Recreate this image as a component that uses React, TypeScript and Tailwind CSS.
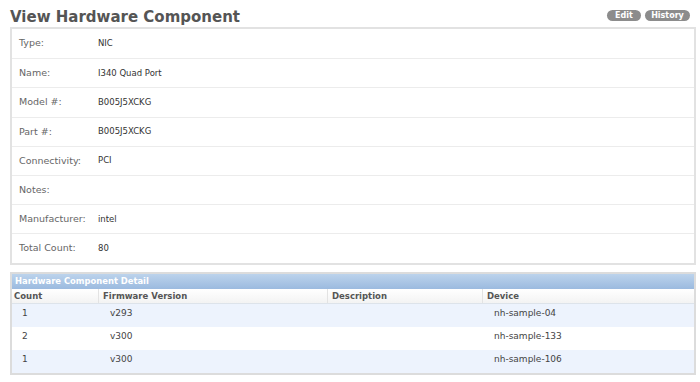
const fields = [
  { label: "Type:", value: "NIC" },
  { label: "Name:", value: "I340 Quad Port" },
  { label: "Model #:", value: "B005J5XCKG" },
  { label: "Part #:", value: "B005J5XCKG" },
  { label: "Connectivity:", value: "PCI" },
  { label: "Notes:", value: "" },
  { label: "Manufacturer:", value: "intel" },
  { label: "Total Count:", value: "80" },
];

const rows = [
  { count: "1", firmware: "v293", description: "", device: "nh-sample-04" },
  { count: "2", firmware: "v300", description: "", device: "nh-sample-133" },
  { count: "1", firmware: "v300", description: "", device: "nh-sample-106" },
];

export default function App() {
  return (
    <div className="h-[382px] w-[700px] bg-white pl-[10px] pr-[4px] pt-[7px] font-['DejaVu_Sans',Verdana,sans-serif]">
      {/* Title bar */}
      <div className="flex h-[20px] items-center justify-between pr-[6px]">
        <h1 className="text-[15px] font-bold leading-[18px] text-[#555]">
          View Hardware Component
        </h1>
        <div className="flex gap-[4px] self-start pt-[3px]">
          <button className="h-[11px] w-[34px] rounded-full bg-[#8c8c8c] text-[8px] font-bold leading-[11px] text-white">
            Edit
          </button>
          <button className="h-[11px] w-[45px] rounded-full bg-[#8c8c8c] text-[8px] font-bold leading-[11px] text-white">
            History
          </button>
        </div>
      </div>

      {/* Fields */}
      <div className="border-2 border-[#e2e2e2]">
        {fields.map((f, i) => (
          <div
            key={f.label}
            className={`flex h-[29.2px] items-center ${i > 0 ? "border-t border-[#ececec]" : ""}`}
          >
            <span className="w-[86px] pl-[7px] text-[9.5px] text-[#666]">
              {f.label}
            </span>
            <span className="text-[8.5px] text-[#333]">{f.value}</span>
          </div>
        ))}
      </div>

      {/* Detail table */}
      <div className="mt-[7px] border-2 border-[#dcdcdc]">
        <div className="h-[15px] bg-gradient-to-b from-[#bcd3ec] to-[#9bbadf] pl-[3px] text-[8.4px] font-bold leading-[15px] text-white">
          Hardware Component Detail
        </div>
        <div className="flex h-[15px] border-b border-[#dde3ea] bg-gradient-to-b from-white to-[#f3f3f3] text-[8.5px] font-bold leading-[15px] text-[#555]">
          <div className="w-[87px] border-r border-[#e3e3e3] pl-[2px]">Count</div>
          <div className="w-[229px] border-r border-[#e3e3e3] pl-[4px]">Firmware Version</div>
          <div className="w-[155px] border-r border-[#e3e3e3] pl-[4px]">Description</div>
          <div className="flex-1 pl-[4px]">Device</div>
        </div>
        {rows.map((r, i) => (
          <div
            key={i}
            className={`flex h-[23px] pt-[3px] text-[9px] text-[#444] ${i % 2 === 0 ? "bg-[#edf3fd]" : "bg-white"}`}
          >
            <div className="w-[87px] pl-[10px]">{r.count}</div>
            <div className="w-[229px] pl-[11px]">{r.firmware}</div>
            <div className="w-[155px] pl-[4px]">{r.description}</div>
            <div className="flex-1 pl-[11px]">{r.device}</div>
          </div>
        ))}
      </div>
    </div>
  );
}
